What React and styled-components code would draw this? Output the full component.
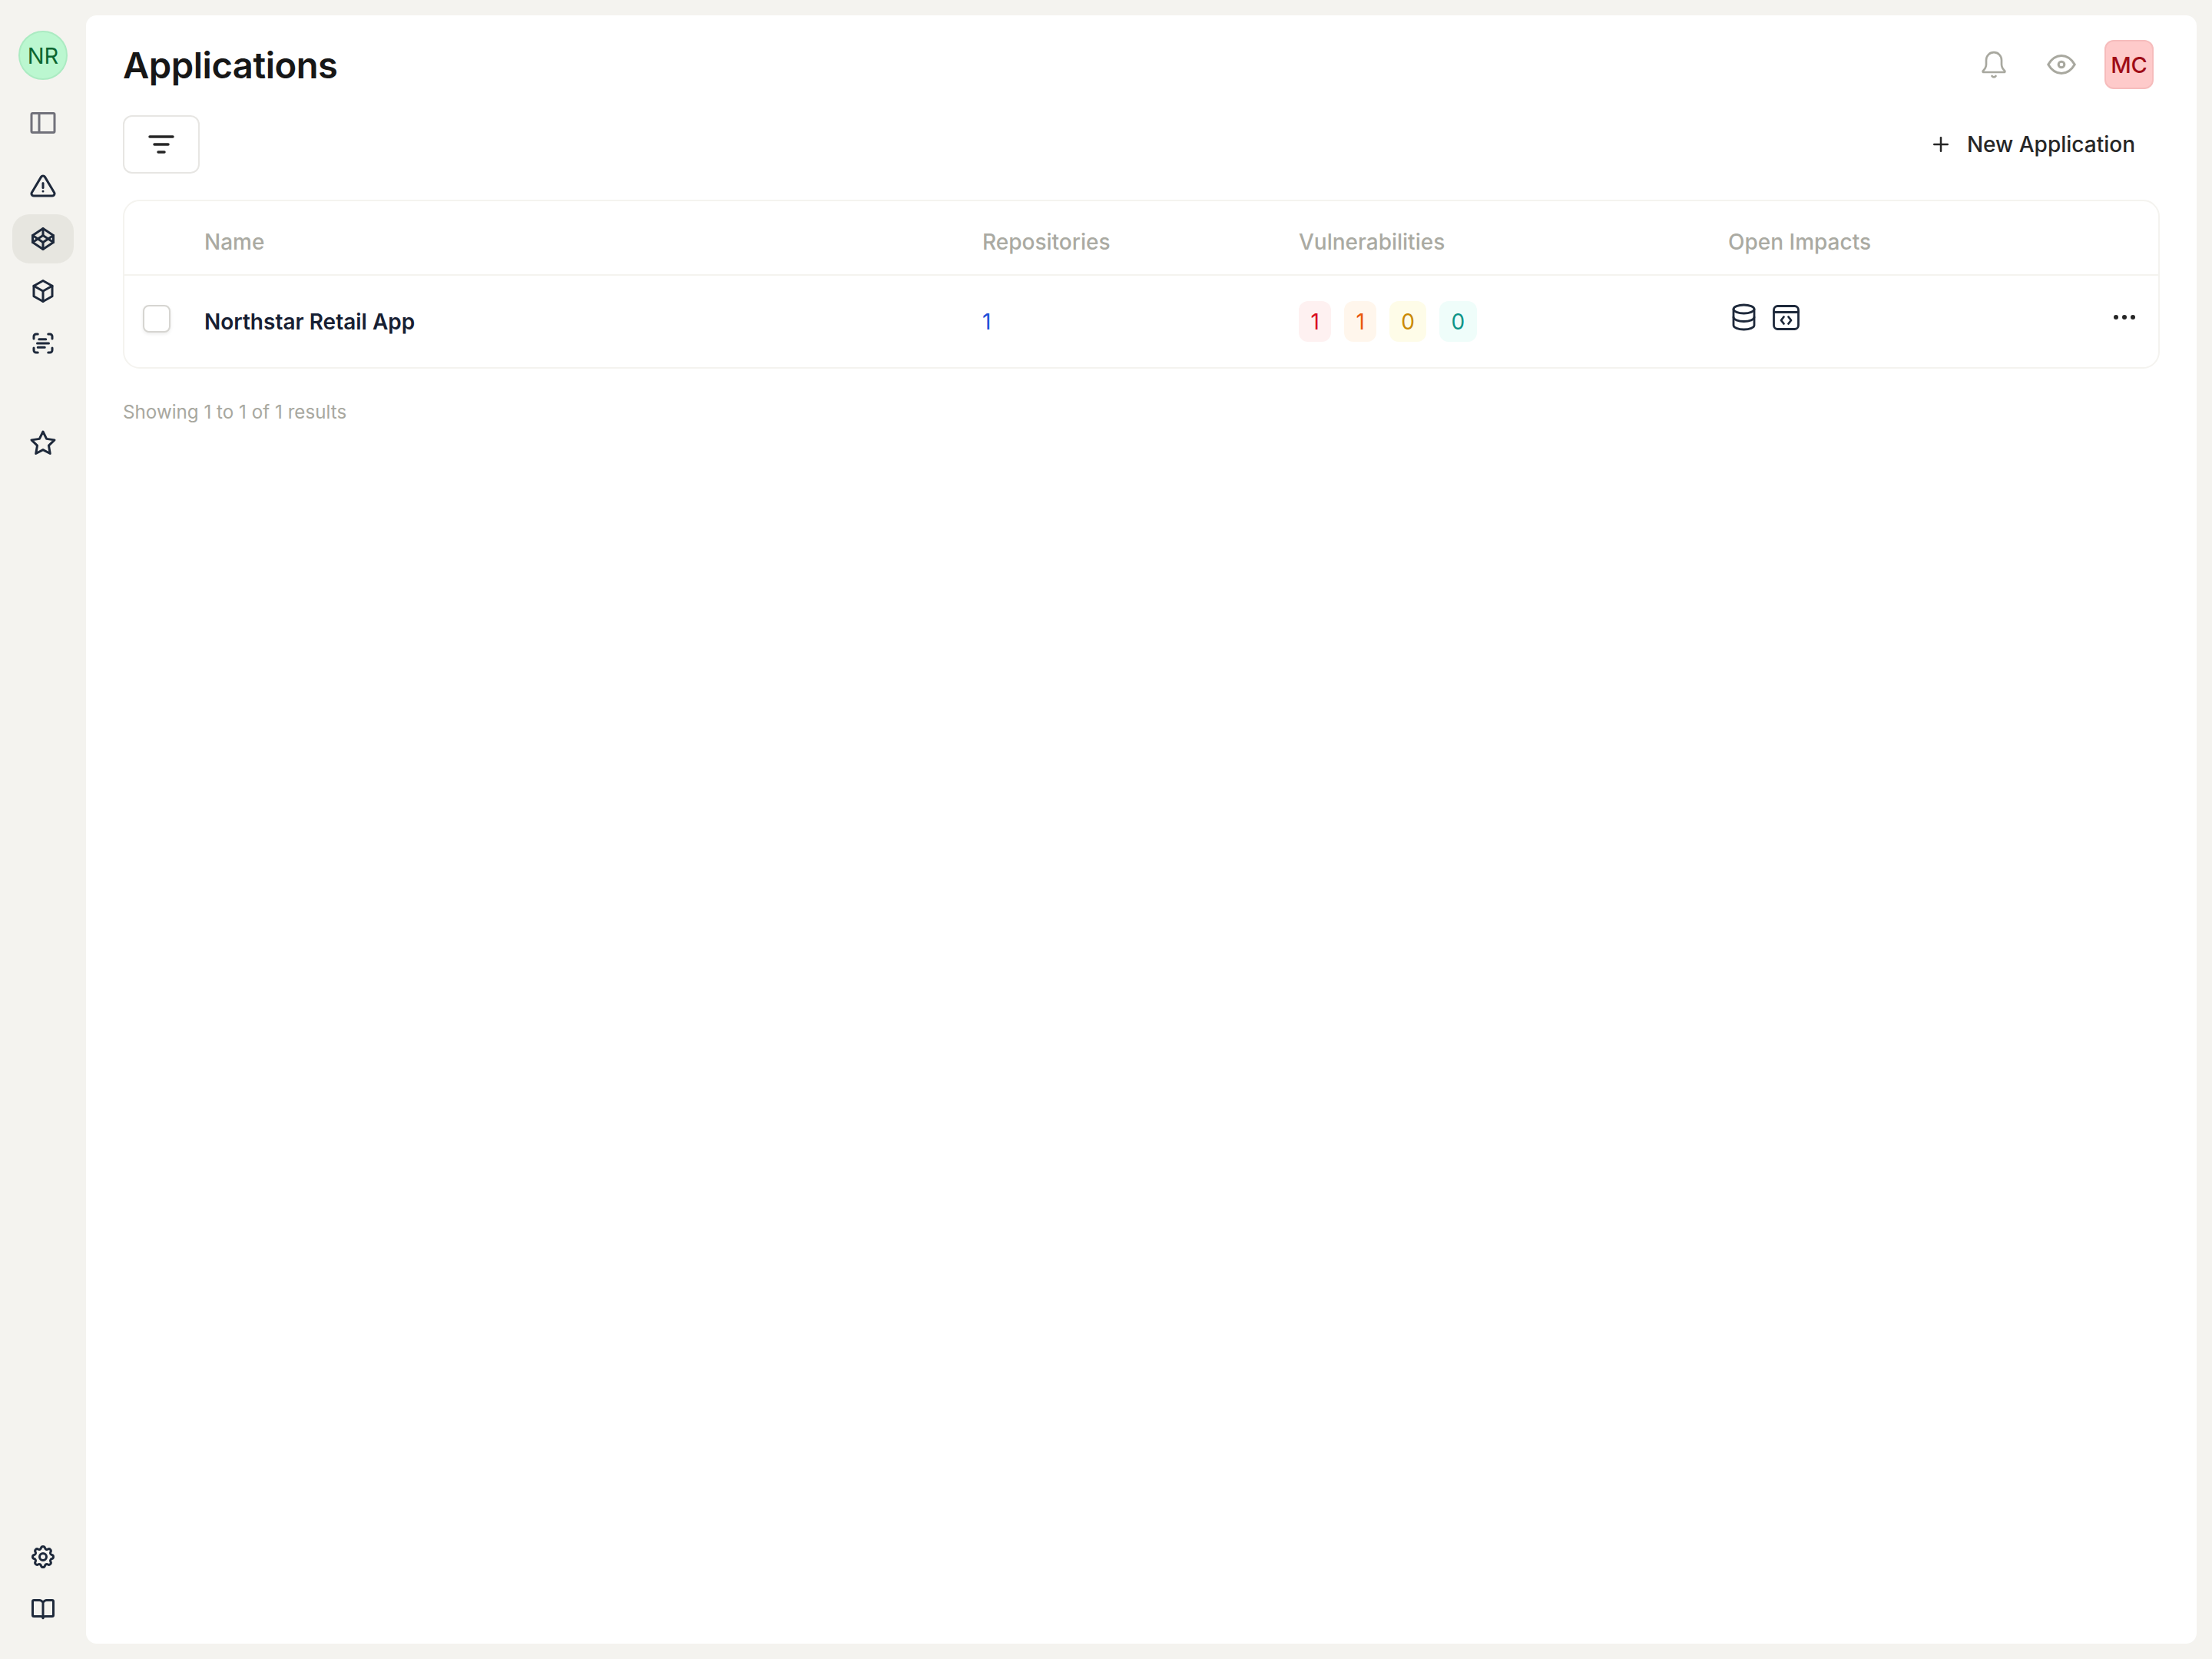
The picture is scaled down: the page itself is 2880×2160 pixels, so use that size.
import React from "react";
import styled, { createGlobalStyle } from "styled-components";
import { TbAlertTriangle, TbBrandCodepen, TbBox, TbStar, TbSettings, TbEye, TbPlus } from "react-icons/tb";

const Global = createGlobalStyle`
  html, body { margin: 0; padding: 0; background: #f4f3ef; }
  body { font-family: Inter, "Liberation Sans", sans-serif; color: #1c1917; }
  * { box-sizing: border-box; }
  svg { flex: none; }
`;

const Shell = styled.div`
  display: flex;
  width: 2880px;
  height: 2160px;
  padding: 20px 20px 20px 0;
  background: #f4f3ef;
`;

const Sidebar = styled.nav`
  width: 112px;
  flex: none;
  display: flex;
  flex-direction: column;
  align-items: center;
  padding: 20px 16px 0;
`;

const OrgAvatar = styled.div`
  width: 64px;
  height: 64px;
  flex: none;
  border-radius: 50%;
  background: #bbf7d0;
  border: 2px solid #abebc2;
  color: #0b6630;
  display: flex;
  align-items: center;
  justify-content: center;
  font-size: 29px;
  font-weight: 400;
`;

const NavGroup = styled.div`
  display: flex;
  flex-direction: column;
  gap: 4px;
  width: 100%;
  margin-top: ${(p) => p.$top}px;
`;

const BottomGroup = styled(NavGroup)`
  margin-top: auto;
  padding-bottom: 14px;
  gap: 3px;
`;

const NavItem = styled.div`
  height: 64px;
  width: 80px;
  border-radius: 22px;
  display: flex;
  align-items: center;
  justify-content: center;
  background: ${(p) => (p.$active ? "#e7e6e0" : "transparent")};
  color: ${(p) => p.$color || "#1e293b"};
  font-size: 36px;
`;

const Main = styled.main`
  flex: 1;
  background: #fff;
  border-radius: 14px;
  padding: 32px 48px 0;
  display: flex;
  flex-direction: column;
`;

const TitleRow = styled.header`
  display: flex;
  align-items: center;
  justify-content: space-between;
  height: 64px;
  padding-right: 8px;
`;

const Title = styled.h1`
  margin: 0;
  padding-top: 1px;
  font-size: 47.2px;
  font-weight: 600;
  letter-spacing: -0.5px;
  color: #171717;
`;

const TopActions = styled.div`
  display: flex;
  align-items: center;
`;

const TopIcon = styled.div`
  width: 40px;
  height: 40px;
  margin-right: ${(p) => p.$gap}px;
  color: #a8a89f;
  display: flex;
  align-items: center;
  justify-content: center;
`;

const UserAvatar = styled.div`
  width: 64px;
  height: 64px;
  border-radius: 12px;
  background: #fecaca;
  border: 2px solid #f6bcbc;
  color: #9f0c17;
  display: flex;
  align-items: center;
  justify-content: center;
  font-size: 29px;
  font-weight: 500;
`;

const Toolbar = styled.div`
  display: flex;
  align-items: center;
  justify-content: space-between;
  margin-top: 34px;
`;

const FilterButton = styled.button`
  width: 100px;
  height: 76px;
  background: #fff;
  border: 2px solid #e7e6e3;
  border-radius: 12px;
  display: flex;
  align-items: center;
  justify-content: center;
  padding: 0;
  color: #262626;
`;

const NewButton = styled.button`
  display: flex;
  align-items: center;
  gap: 19px;
  height: 76px;
  padding: 0 32px;
  background: transparent;
  border: 0;
  font-family: inherit;
  font-size: 28px;
  font-weight: 500;
  color: #262626;
`;

const TableCard = styled.section`
  margin-top: 34px;
  border: 2px solid #f4f3ef;
  border-radius: 22px;
`;

const Row = styled.div`
  display: grid;
  grid-template-columns: 104px 1013px 412px 559px 1fr;
  align-items: center;
  height: ${(p) => p.$h}px;
  border-bottom: ${(p) => (p.$line ? "2px solid #f4f3ef" : "0")};
`;

const HeadCell = styled.div`
  padding-top: 11px;
  font-size: 28px;
  font-weight: 500;
  color: #aaaaa2;
`;

const CheckCell = styled.div`
  padding: 0 0 7px 24px;
`;

const Checkbox = styled.div`
  width: 36px;
  height: 36px;
  border: 2px solid #d6d5d1;
  border-radius: 8px;
  background: #fff;
  box-shadow: 0 2px 4px rgba(0, 0, 0, 0.08);
`;

const AppName = styled.div`
  font-size: 28px;
  font-weight: 600;
  color: #172033;
`;

const RepoCount = styled.div`
  font-size: 28px;
  color: #1d4ed8;
`;

const Badges = styled.div`
  display: flex;
  gap: 16.500px;
`;

const Badge = styled.span`
  height: 53px;
  padding: 0 15.500px;
  border-radius: 12px;
  display: flex;
  align-items: center;
  justify-content: center;
  font-size: 28px;
  background: ${(p) => p.$bg};
  color: ${(p) => p.$fg};
`;

const ImpactIcons = styled.div`
  display: flex;
  align-items: center;
  gap: 22px;
  padding-left: 5px;
  color: #1e293b;
`;

const ImpactCell = styled.div`
  display: flex;
  align-items: center;
  justify-content: space-between;
  padding: 0 30px 11px 0;
`;

const Footer = styled.div`
  margin-top: 42px;
  font-size: 24.200px;
  color: #a8a89f;
`;

const SidebarPanelIcon = () => (
  <svg width="34" height="30" viewBox="0 0 34 30" fill="none" stroke="currentColor" strokeWidth="3">
    <rect x="2" y="2.500" width="30" height="25" rx="1.500" />
    <line x1="12" y1="2.500" x2="12" y2="27.500" />
  </svg>
);

const ScanIcon = () => (
  <svg width="36" height="36" viewBox="0 0 24 24" fill="none" stroke="currentColor" strokeWidth="2" strokeLinecap="round" strokeLinejoin="round">
    <path d="M4 8V6a2 2 0 0 1 2-2h1.500M4 16v2a2 2 0 0 0 2 2h1.500M16.500 4H18a2 2 0 0 1 2 2v2M16.500 20H18a2 2 0 0 0 2-2v-2M8.500 8.500h6M7 12h10M7.500 15.500h6" />
  </svg>
);

const BookIcon = () => (
  <svg width="36" height="36" viewBox="0 0 24 24" fill="none" stroke="currentColor" strokeWidth="2" strokeLinecap="round" strokeLinejoin="round">
    <path d="M12 20.500V7c-1-1.500-2-2-3-2H4a1 1 0 0 0-1 1v12a1 1 0 0 0 1 1h6c1 0 2 .5 2 1.500c0-1 1-1.500 2-1.500h6a1 1 0 0 0 1-1V6a1 1 0 0 0-1-1h-5c-1 0-2 .5-3 2" />
  </svg>
);

const BellIcon = () => (
  <svg width="40" height="40" viewBox="0 0 24 24" fill="none" stroke="currentColor" strokeWidth="1.600" strokeLinecap="round" strokeLinejoin="round">
    <path d="M12 2.500a6 6 0 0 0-6 6v3.500c0 2-1 3.500-2.500 5c-.4.5 0 1 .5 1h16c.5 0 .9-.5.500-1C19 15.500 18 14 18 12V8.500a6 6 0 0 0-6-6Z" />
    <path d="M10.500 21a1.800 1.800 0 0 0 3 0" />
  </svg>
);

const FilterIcon = () => (
  <svg width="36" height="26" viewBox="0 0 36 26" fill="none" stroke="currentColor" strokeWidth="3.500" strokeLinecap="round">
    <line x1="3" y1="3" x2="33" y2="3" />
    <line x1="9" y1="13" x2="27" y2="13" />
    <line x1="14" y1="23" x2="22" y2="23" />
  </svg>
);

const DatabaseIcon = () => (
  <svg width="31" height="36" viewBox="0 0 31 36" fill="none" stroke="currentColor" strokeWidth="2.800" strokeLinecap="round" strokeLinejoin="round">
    <ellipse cx="15.500" cy="7.500" rx="13.500" ry="5.500" />
    <path d="M2 7.500v21c0 3 6 5.500 13.500 5.500s13.500-2.500 13.500-5.500v-21" />
    <path d="M2 18c0 3 6 5.500 13.500 5.500s13.500-2.500 13.500-5.500" />
  </svg>
);

const CodeWindowIcon = () => (
  <svg width="35" height="33" viewBox="0 0 35 33" fill="none" stroke="currentColor" strokeWidth="2.800" strokeLinecap="round" strokeLinejoin="round">
    <rect x="1.500" y="1.500" width="32" height="30" rx="5" />
    <path d="M1.500 9.500h32" />
    <path d="M14.500 15.500l-3.500 4.500l3.500 4.500M20.500 15.500l3.500 4.500l-3.500 4.500" />
  </svg>
);

const MoreIcon = () => (
  <svg width="28" height="10" viewBox="0 0 28 10" fill="#262626">
    <circle cx="3" cy="5" r="3" />
    <circle cx="14" cy="5" r="3" />
    <circle cx="25" cy="5" r="3" />
  </svg>
);

const badges = [
  ["1", "#fef1f1", "#d90d1e"],
  ["1", "#fff6ec", "#ea580c"],
  ["0", "#fefce8", "#ca8a04"],
  ["0", "#effdfa", "#0d9488"],
];

export default function App() {
  return (
    <>
      <Global />
      <Shell>
        <Sidebar>
          <OrgAvatar>NR</OrgAvatar>
          <NavGroup $top={24}>
            <NavItem $color="#71717a"><SidebarPanelIcon /></NavItem>
          </NavGroup>
          <NavGroup $top={19}>
            <NavItem><TbAlertTriangle /></NavItem>
            <NavItem $active><TbBrandCodepen /></NavItem>
            <NavItem><TbBox /></NavItem>
            <NavItem><ScanIcon /></NavItem>
          </NavGroup>
          <NavGroup $top={66}>
            <NavItem><TbStar /></NavItem>
          </NavGroup>
          <BottomGroup>
            <NavItem><TbSettings /></NavItem>
            <NavItem><BookIcon /></NavItem>
          </BottomGroup>
        </Sidebar>
        <Main>
          <TitleRow>
            <Title>Applications</Title>
            <TopActions>
              <TopIcon $gap={48}><BellIcon /></TopIcon>
              <TopIcon $gap={36}><TbEye size={46} strokeWidth={1.6} /></TopIcon>
              <UserAvatar>MC</UserAvatar>
            </TopActions>
          </TitleRow>
          <Toolbar>
            <FilterButton aria-label="Filter"><FilterIcon /></FilterButton>
            <NewButton><TbPlus size={30} />New Application</NewButton>
          </Toolbar>
          <TableCard>
            <Row $h={97} $line>
              <div />
              <HeadCell>Name</HeadCell>
              <HeadCell>Repositories</HeadCell>
              <HeadCell>Vulnerabilities</HeadCell>
              <HeadCell>Open Impacts</HeadCell>
            </Row>
            <Row $h={119}>
              <CheckCell><Checkbox /></CheckCell>
              <AppName>Northstar Retail App</AppName>
              <RepoCount>1</RepoCount>
              <Badges>
                {badges.map(([n, bg, fg], i) => (
                  <Badge key={i} $bg={bg} $fg={fg}>{n}</Badge>
                ))}
              </Badges>
              <ImpactCell>
                <ImpactIcons>
                  <DatabaseIcon />
                  <CodeWindowIcon />
                </ImpactIcons>
                <MoreIcon />
              </ImpactCell>
            </Row>
          </TableCard>
          <Footer>Showing 1 to 1 of 1 results</Footer>
        </Main>
      </Shell>
    </>
  );
}
